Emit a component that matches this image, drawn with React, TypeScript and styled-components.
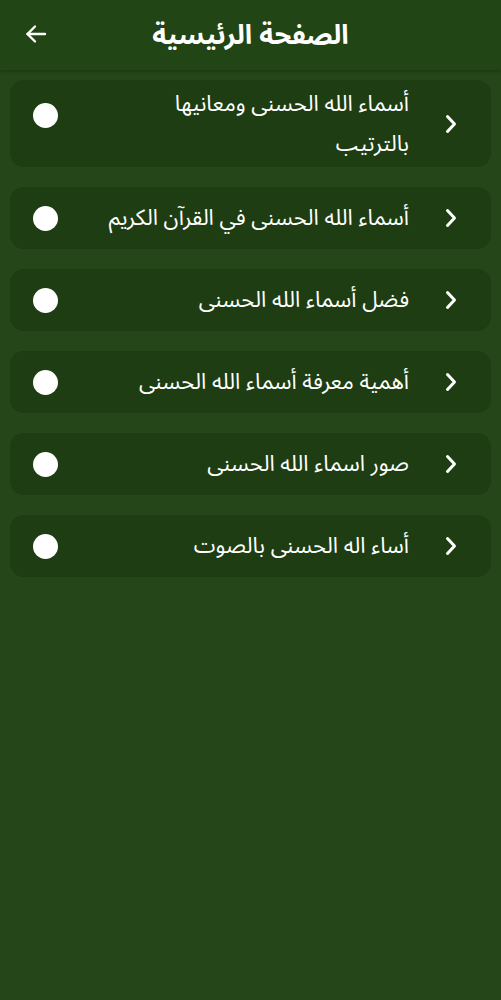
import React from "react";
import styled, { createGlobalStyle } from "styled-components";

const Global = createGlobalStyle`
  html, body { margin: 0; padding: 0; background: #244618; }
  body { font-family: "Noto Sans Arabic", "Noto Sans", "DejaVu Sans", sans-serif; }
  * { box-sizing: border-box; }
`;

const Page = styled.div`
  min-height: 1000px;
  background: #244618;
  display: flex;
  flex-direction: column;
`;

const Header = styled.header`
  height: 70px;
  background: #214514;
  display: flex;
  align-items: center;
  justify-content: center;
  position: relative;
  box-shadow: 0 2px 3px rgba(0, 0, 0, 0.18);
  z-index: 1;
`;

const BackButton = styled.button`
  position: absolute;
  left: 24px;
  top: 22px;
  width: 24px;
  height: 24px;
  padding: 0;
  border: 0;
  background: transparent;
  display: flex;
  align-items: center;
  justify-content: center;
`;

const Title = styled.h1`
  margin: 0;
  color: #ffffff;
  font-size: 27px;
  font-weight: 700;
  direction: rtl;
`;

const List = styled.div`
  display: flex;
  flex-direction: column;
  gap: 20px;
  padding: 10px 10px;
`;

const Card = styled.div<{ $multi?: boolean }>`
  direction: rtl;
  background: #1e3d12;
  border-radius: 14px;
  min-height: 62px;
  display: flex;
  align-items: center;
  padding: ${(p) => (p.$multi ? "4px 34px 3px 23px" : "0 34px 0 23px")};
`;

const Chevron = styled.span`
  width: 12px;
  flex: none;
  display: flex;
  align-items: center;
  margin-left: 36px;
`;

const Label = styled.div<{ $max?: number }>`
  flex: 0 1 auto;
  color: #ffffff;
  font-size: 22px;
  line-height: 40px;
  text-align: right;
  max-width: ${(p) => (p.$max ? `${p.$max}px` : "none")};
`;

const Spacer = styled.span`
  flex: 1;
  min-width: 20px;
`;

const Dot = styled.span<{ $top?: boolean }>`
  flex: none;
  width: 25px;
  height: 25px;
  border-radius: 50%;
  background: #ffffff;
  align-self: ${(p) => (p.$top ? "flex-start" : "center")};
  margin-top: ${(p) => (p.$top ? "19px" : "0")};
`;

const items = [
  "أسماء الله الحسنى ومعانيها بالترتيب",
  "أسماء الله الحسنى في القرآن الكريم",
  "فضل أسماء الله الحسنى",
  "أهمية معرفة أسماء الله الحسنى",
  "صور اسماء الله الحسنى",
  "أساء اله الحسنى بالصوت",
];

export default function App() {
  return (
    <>
      <Global />
      <Page>
        <Header>
          <BackButton aria-label="back">
            <svg width="24" height="24" viewBox="0 0 24 24" fill="none" stroke="#fff" strokeWidth="2.4" strokeLinecap="round" strokeLinejoin="round">
              <path d="M21 12H3.5" />
              <path d="M11 4.5L3.5 12l7.5 7.5" />
            </svg>
          </BackButton>
          <Title>الصفحة الرئيسية</Title>
        </Header>
        <List>
          {items.map((t, i) => (
            <Card key={i} $multi={i === 0}>
              <Chevron>
                <svg width="12" height="20" viewBox="0 0 12 20" fill="none" stroke="#fff" strokeWidth="3" strokeLinecap="round" strokeLinejoin="round">
                  <path d="M2.5 2.5L9.5 10l-7 7.5" />
                </svg>
              </Chevron>
              <Label $max={i === 0 ? 275 : undefined}>{t}</Label>
              <Spacer />
              <Dot $top={i === 0} />
            </Card>
          ))}
        </List>
      </Page>
    </>
  );
}
